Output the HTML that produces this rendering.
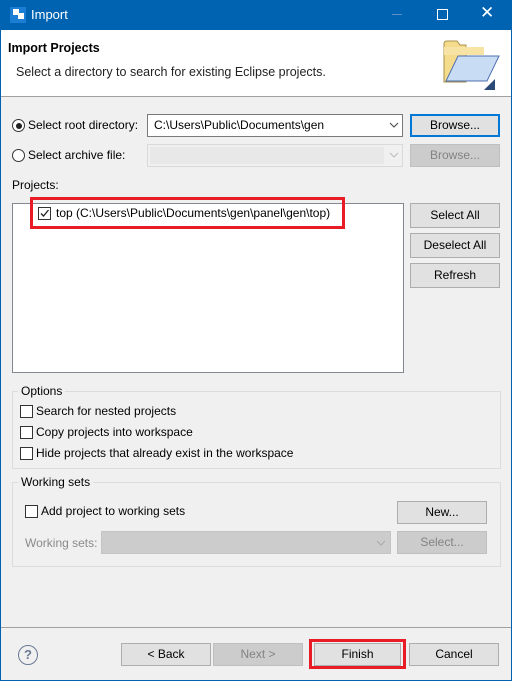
<!DOCTYPE html>
<html><head><meta charset="utf-8"><style>
*{box-sizing:border-box;margin:0;padding:0}
body{width:512px;height:681px;overflow:hidden;background:#f0f0f0;font-family:"Liberation Sans",sans-serif;font-size:12px;color:#000;position:relative}
.a{position:absolute;white-space:nowrap}
.btn{position:absolute;background:#e1e1e1;border:1px solid #adadad;text-align:center;line-height:20px}
.dis{background:#cccccc;border-color:#bfbfbf;color:#838383}
.cb{position:absolute;width:13px;height:13px;border:1px solid #333;background:#fff}
.grp{position:absolute;border:1px solid #dcdcdc}
</style></head><body>
<div class="a" style="left:0;top:0;width:512px;height:30px;background:#0063b1"></div>
<div class="a" style="left:10px;top:7px;width:16px;height:16px;background:#1a7fd4"></div>
<div class="a" style="left:13px;top:9px;width:6px;height:6px;background:#fff"></div>
<div class="a" style="left:18px;top:13px;width:6px;height:6px;background:#fff"></div>
<div class="a" style="left:31px;top:7px;color:#fff;font-size:13px">Import</div>
<div class="a" style="left:392px;top:14px;width:10px;height:1px;background:#5a8fc8"></div>
<div class="a" style="left:437px;top:9px;width:11px;height:11px;border:1px solid #fff"></div>
<div class="a" style="left:480px;top:3px;color:#fff;font-size:17px">✕</div>
<div class="a" style="left:0;top:30px;width:1px;height:651px;background:#0063b1"></div>
<div class="a" style="left:511px;top:30px;width:1px;height:651px;background:#0063b1"></div>
<div class="a" style="left:0;top:680px;width:512px;height:1px;background:#0063b1"></div>
<div class="a" style="left:1px;top:30px;width:510px;height:66px;background:#fff"></div>
<div class="a" style="left:1px;top:96px;width:510px;height:1px;background:#a0a0a0"></div>
<div class="a" style="left:8px;top:41px;font-weight:bold;font-size:12.5px">Import Projects</div>
<div class="a" style="left:16px;top:65px;color:#222;font-size:12.5px">Select a directory to search for existing Eclipse projects.</div>
<svg class="a" style="left:440px;top:34px" width="66" height="60" viewBox="0 0 66 60">
<path d="M4 10 q0-3 3-3 h10 l3 4 h6 v37 h-22z" fill="#f5dc8c" stroke="#a89048"/>
<path d="M4 13 h40 v8 h-40z" fill="#f7e3a3"/>
<path d="M18 22 h41 l-12 25 h-41z" fill="#c8dcf4" stroke="#5070b0"/>
<path d="M55 45 v11 h-11z" fill="#2c4a78"/>
</svg>
<div class="a" style="left:12px;top:119px;width:13px;height:13px;border:1px solid #333;border-radius:50%;background:#fff"></div>
<div class="a" style="left:15.5px;top:122.5px;width:6px;height:6px;border-radius:50%;background:#222"></div>
<div class="a" style="left:28px;top:118px">Select root directory:</div>
<div class="a" style="left:147px;top:114px;width:256px;height:23px;border:1px solid #7a7a7a;background:#fff;padding:3px 6px">C:\Users\Public\Documents\gen</div>
<svg class="a" style="left:389px;top:122px" width="10" height="6"><path d="M1 1 l4 4 l4 -4" fill="none" stroke="#444"/></svg>
<div class="btn" style="left:410px;top:114px;width:90px;height:23px;border:2px solid #0078d7;line-height:19px">Browse...</div>
<div class="a" style="left:12px;top:149px;width:13px;height:13px;border:1px solid #333;border-radius:50%;background:#fff"></div>
<div class="a" style="left:28px;top:148px">Select archive file:</div>
<div class="a" style="left:147px;top:144px;width:256px;height:23px;border:1px solid #d9d9d9;background:#f0f0f0"></div>
<div class="a" style="left:150px;top:147px;width:234px;height:17px;background:#e8e8e8"></div>
<svg class="a" style="left:389px;top:152px" width="10" height="6"><path d="M1 1 l4 4 l4 -4" fill="none" stroke="#bbb"/></svg>
<div class="btn dis" style="left:410px;top:144px;width:90px;height:23px">Browse...</div>
<div class="a" style="left:12px;top:178px">Projects:</div>
<div class="a" style="left:12px;top:203px;width:392px;height:170px;border:1px solid #828790;background:#fff"></div>
<div class="cb" style="left:38px;top:207px"></div>
<svg class="a" style="left:38px;top:207px" width="13" height="13"><path d="M3 6.5 l2.5 2.5 l5 -6" fill="none" stroke="#222" stroke-width="1.3"/></svg>
<div class="a" style="left:56px;top:206px">top (C:\Users\Public\Documents\gen\panel\gen\top)</div>
<div class="a" style="left:30px;top:197px;width:315px;height:32px;border:3px solid #e81c24"></div>
<div class="btn" style="left:410px;top:203px;width:90px;height:25px;line-height:23px">Select All</div>
<div class="btn" style="left:410px;top:233px;width:90px;height:25px;line-height:23px">Deselect All</div>
<div class="btn" style="left:410px;top:263px;width:90px;height:25px;line-height:23px">Refresh</div>
<div class="grp" style="left:12px;top:391px;width:489px;height:78px"></div>
<div class="a" style="left:18px;top:384px;background:#f0f0f0;padding:0 3px">Options</div>
<div class="cb" style="left:20px;top:405px"></div><div class="a" style="left:36px;top:404px">Search for nested projects</div>
<div class="cb" style="left:20px;top:426px"></div><div class="a" style="left:36px;top:425px">Copy projects into workspace</div>
<div class="cb" style="left:20px;top:447px"></div><div class="a" style="left:36px;top:446px">Hide projects that already exist in the workspace</div>
<div class="grp" style="left:12px;top:482px;width:489px;height:85px"></div>
<div class="a" style="left:18px;top:475px;background:#f0f0f0;padding:0 3px">Working sets</div>
<div class="cb" style="left:25px;top:505px"></div><div class="a" style="left:41px;top:504px">Add project to working sets</div>
<div class="btn" style="left:397px;top:501px;width:90px;height:23px">New...</div>
<div class="a" style="left:25px;top:536px;color:#8a8a8a">Working sets:</div>
<div class="a" style="left:101px;top:531px;width:290px;height:23px;border:1px solid #c4c4c4;background:#cccccc"></div>
<svg class="a" style="left:376px;top:540px" width="10" height="6"><path d="M1 1 l4 4 l4 -4" fill="none" stroke="#aaa"/></svg>
<div class="btn dis" style="left:397px;top:531px;width:90px;height:23px">Select...</div>
<div class="a" style="left:1px;top:627px;width:510px;height:1px;background:#a0a0a0"></div>
<div class="a" style="left:18px;top:645px;width:20px;height:20px;border:1.5px solid #6a7a94;border-radius:50%;color:#6a7a94;font-weight:bold;font-size:13px;text-align:center;line-height:17px">?</div>
<div class="btn" style="left:121px;top:643px;width:90px;height:23px">&lt; Back</div>
<div class="btn dis" style="left:213px;top:643px;width:90px;height:23px">Next &gt;</div>
<div class="btn" style="left:314px;top:643px;width:87px;height:23px">Finish</div>
<div class="a" style="left:309px;top:639px;width:97px;height:30px;border:3px solid #e81c24"></div>
<div class="btn" style="left:409px;top:643px;width:90px;height:23px">Cancel</div>
</body></html>
